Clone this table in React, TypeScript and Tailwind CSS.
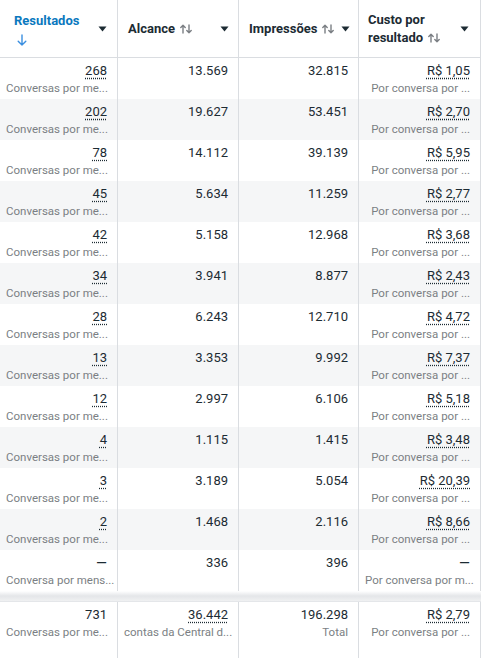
import { ReactNode } from "react";

type Row = {
  res: string;
  resSub: string;
  reach: string;
  impr: string;
  cost: string;
  costSub: string;
};

const rows: Row[] = [
  { res: "268", resSub: "Conversas por me...", reach: "13.569", impr: "32.815", cost: "R$ 1,05", costSub: "Por conversa por ..." },
  { res: "202", resSub: "Conversas por me...", reach: "19.627", impr: "53.451", cost: "R$ 2,70", costSub: "Por conversa por ..." },
  { res: "78", resSub: "Conversas por me...", reach: "14.112", impr: "39.139", cost: "R$ 5,95", costSub: "Por conversa por ..." },
  { res: "45", resSub: "Conversas por me...", reach: "5.634", impr: "11.259", cost: "R$ 2,77", costSub: "Por conversa por ..." },
  { res: "42", resSub: "Conversas por me...", reach: "5.158", impr: "12.968", cost: "R$ 3,68", costSub: "Por conversa por ..." },
  { res: "34", resSub: "Conversas por me...", reach: "3.941", impr: "8.877", cost: "R$ 2,43", costSub: "Por conversa por ..." },
  { res: "28", resSub: "Conversas por me...", reach: "6.243", impr: "12.710", cost: "R$ 4,72", costSub: "Por conversa por ..." },
  { res: "13", resSub: "Conversas por me...", reach: "3.353", impr: "9.992", cost: "R$ 7,37", costSub: "Por conversa por ..." },
  { res: "12", resSub: "Conversas por me...", reach: "2.997", impr: "6.106", cost: "R$ 5,18", costSub: "Por conversa por ..." },
  { res: "4", resSub: "Conversas por me...", reach: "1.115", impr: "1.415", cost: "R$ 3,48", costSub: "Por conversa por ..." },
  { res: "3", resSub: "Conversas por me...", reach: "3.189", impr: "5.054", cost: "R$ 20,39", costSub: "Por conversa por ..." },
  { res: "2", resSub: "Conversas por me...", reach: "1.468", impr: "2.116", cost: "R$ 8,66", costSub: "Por conversa por ..." },
  { res: "—", resSub: "Conversa por mens...", reach: "336", impr: "396", cost: "—", costSub: "Por conversa por m..." },
];

function Caret() {
  return (
    <svg width="9" height="6" viewBox="0 0 9 6" className="shrink-0">
      <path d="M0.5 0.5h8L4.5 5.5z" fill="#1c2b33" />
    </svg>
  );
}

function SortIcon() {
  return (
    <svg width="12" height="10" viewBox="0 0 12 10" className="inline-block ml-[5px] align-[-1px]">
      <g stroke="#7b7f84" strokeWidth="1.4" fill="none" strokeLinecap="round" strokeLinejoin="round">
        <path d="M3 9V1.2M0.8 3.4L3 1.2l2.2 2.2" />
        <path d="M9 1v7.8M6.8 6.6L9 8.8l2.2-2.2" />
      </g>
    </svg>
  );
}

function DownArrow() {
  return (
    <svg width="10" height="12" viewBox="0 0 10 12" className="block ml-[3px] mt-[4px]">
      <g stroke="#3b8fe0" strokeWidth="1.4" fill="none" strokeLinecap="round" strokeLinejoin="round">
        <path d="M5 1v10M1.2 7.2L5 11l3.8-3.8" />
      </g>
    </svg>
  );
}

function Dotted({ children }: { children: ReactNode }) {
  return (
    <span className="underline decoration-dotted decoration-[#1c2b33] underline-offset-[3px]">{children}</span>
  );
}

function Cell({
  value,
  sub,
  dotted,
}: {
  value: string;
  sub?: string;
  dotted?: boolean;
}) {
  const isDash = value === "—";
  return (
    <div className="min-w-0 pl-[6px] pr-[10px] pt-[3px] border-r border-[#dadde1]">
      <div className={`text-right leading-[20px] text-[#1c2b33] ${isDash ? "text-[14px]" : "text-[13px]"}`}>
        {dotted && !isDash ? <Dotted>{value}</Dotted> : value}
      </div>
      {sub && (
        <div className="whitespace-nowrap text-right text-[11.5px] leading-[15px] text-[#7b7f84]">{sub}</div>
      )}
    </div>
  );
}

export default function App() {
  return (
    <div className="w-[481px] h-[658px] overflow-hidden bg-white" style={{ fontFamily: "Roboto, 'Open Sans', sans-serif" }}>
      {/* Header */}
      <div className="grid grid-cols-[118px_121px_120px_122px] h-[58px] border-b border-[#dadde1]">
        <div className="flex items-center justify-between pl-[14px] pr-[10px] border-r border-[#dadde1]">
          <div className="text-[13px] font-bold leading-[18px] text-[#0a78be]">
            <div>Resultados</div>
            <DownArrow />
          </div>
          <Caret />
        </div>
        <div className="flex items-center justify-between pl-[10px] pr-[9px] border-r border-[#dadde1]">
          <div className="text-[13px] font-bold text-[#1c2b33]">
            Alcance
            <SortIcon />
          </div>
          <Caret />
        </div>
        <div className="flex items-center justify-between pl-[10px] pr-[8px] border-r border-[#dadde1]">
          <div className="text-[13px] font-bold text-[#1c2b33] whitespace-nowrap">
            Impressões
            <SortIcon />
          </div>
          <Caret />
        </div>
        <div className="flex items-center justify-between pl-[9px] pr-[11px] border-r border-[#dadde1]">
          <div className="text-[13px] font-bold leading-[18px] text-[#1c2b33]">
            <div>Custo por</div>
            <div>
              resultado
              <SortIcon />
            </div>
          </div>
          <Caret />
        </div>
      </div>

      {/* Body */}
      {rows.map((r, i) => (
        <div
          key={i}
          className={`grid grid-cols-[118px_121px_120px_122px] h-[41px] ${i % 2 === 1 ? "bg-[#f5f6f7]" : "bg-white"}`}
        >
          <Cell value={r.res} sub={r.resSub} dotted />
          <Cell value={r.reach} />
          <Cell value={r.impr} />
          <Cell value={r.cost} sub={r.costSub} dotted />
        </div>
      ))}

      {/* Totals */}
      <div className="h-[11px] bg-gradient-to-b from-white via-[#e4e6e9] to-[#f0f1f2] border-b border-[#e4e6e9]" />
      <div className="grid grid-cols-[118px_121px_120px_122px] h-[60px]">
        <Cell value="731" sub="Conversas por me..." />
        <Cell value="36.442" sub="contas da Central d..." dotted />
        <Cell value="196.298" sub="Total" />
        <Cell value="R$ 2,79" sub="Por conversa por ..." dotted />
      </div>
    </div>
  );
}
